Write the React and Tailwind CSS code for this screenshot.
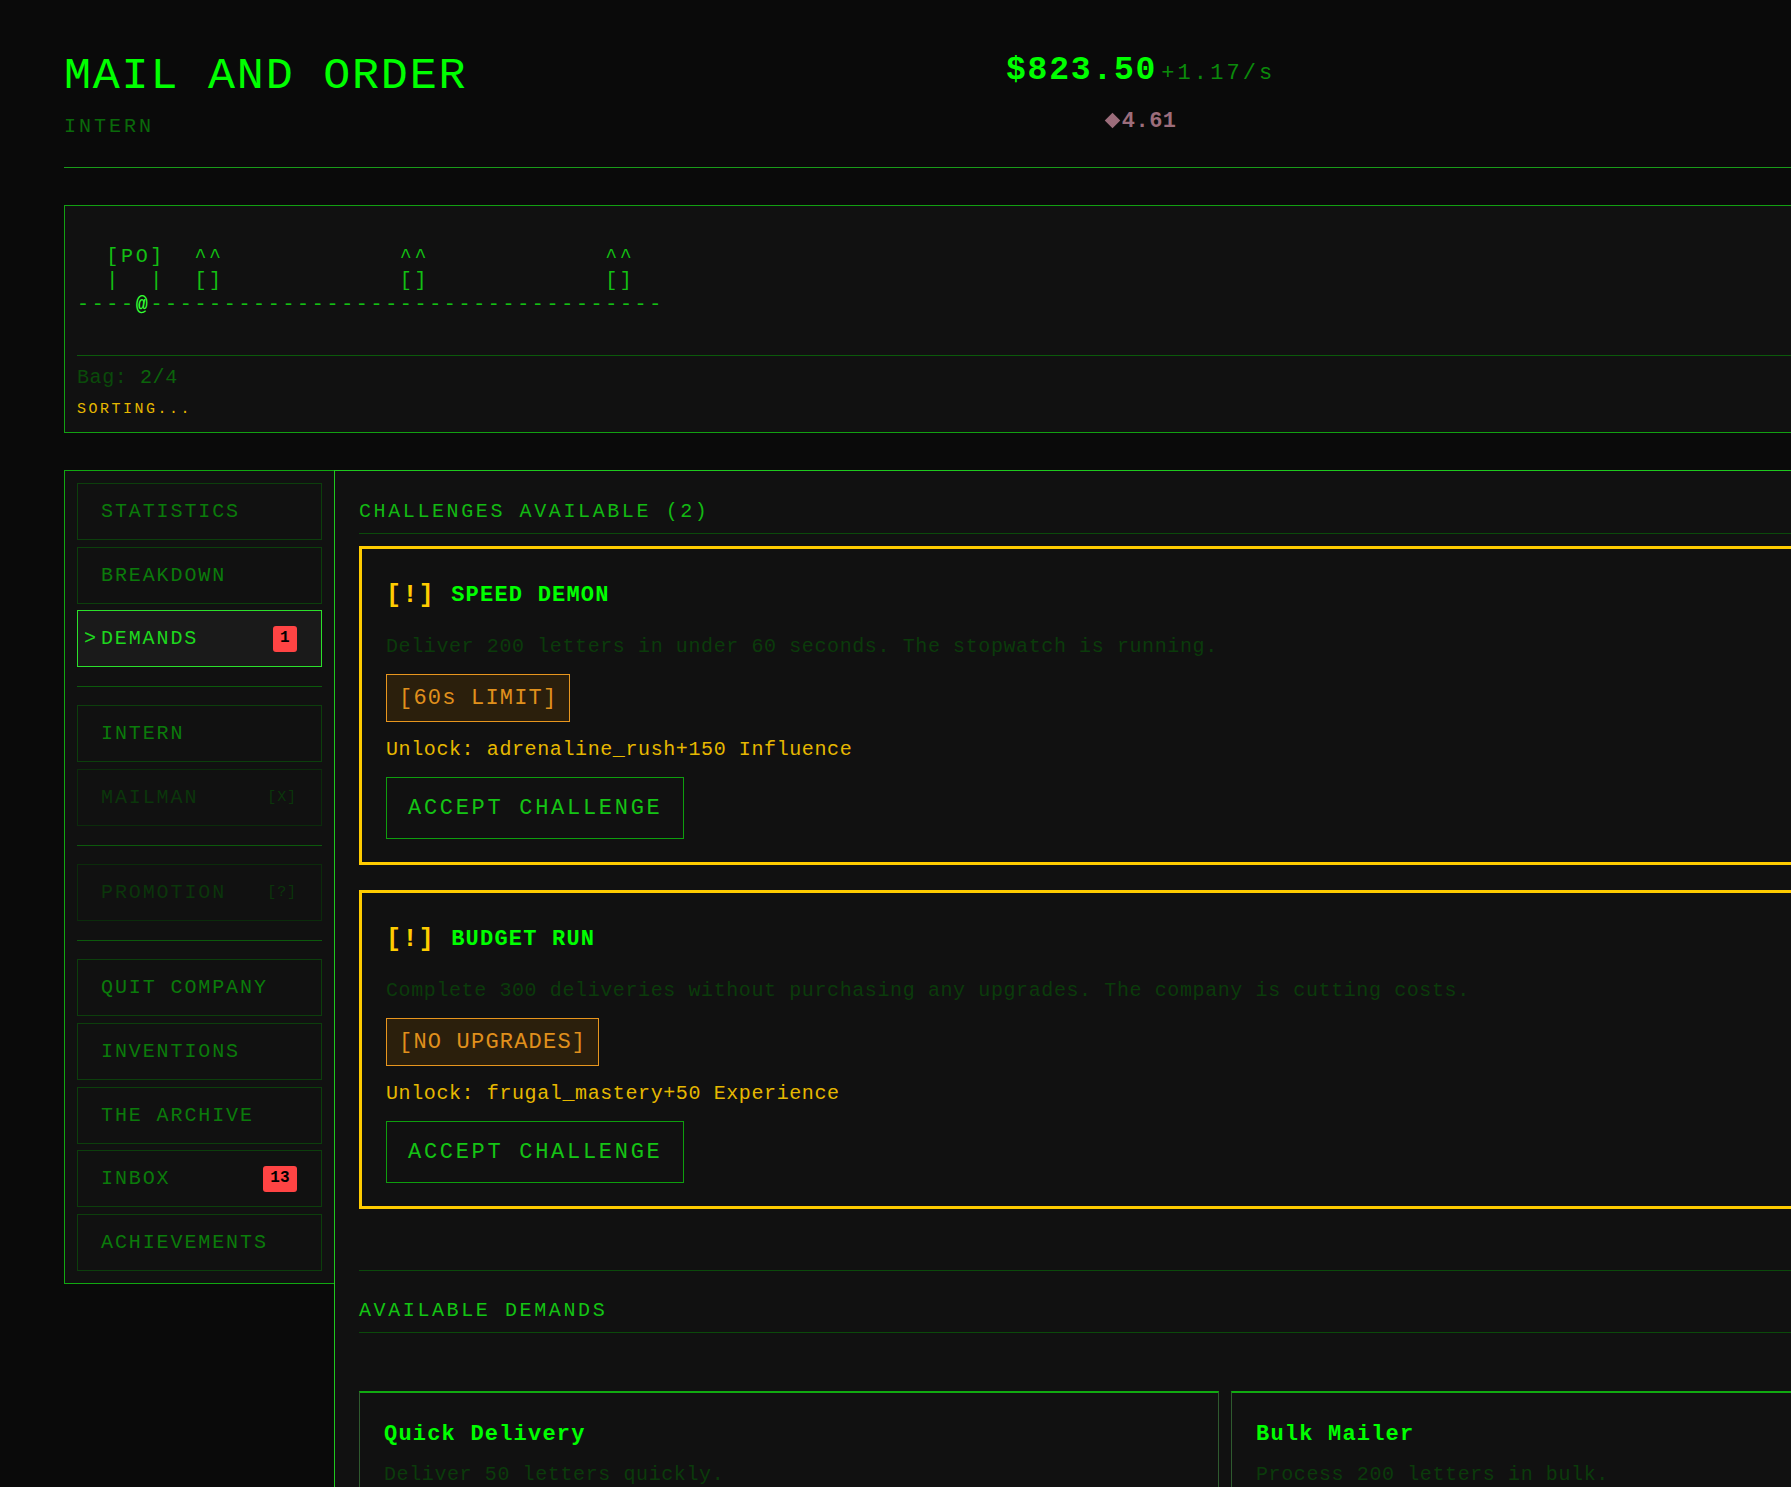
import React from 'react'

const NAV = [
  { label: 'STATISTICS' },
  { label: 'BREAKDOWN' },
  { label: 'DEMANDS', active: true, badge: '1' },
  { divider: true },
  { label: 'INTERN' },
  { label: 'MAILMAN', disabled: true, tag: '[X]' },
  { divider: true },
  { label: 'PROMOTION', disabled: true, tag: '[?]' },
  { divider: true },
  { label: 'QUIT COMPANY' },
  { label: 'INVENTIONS' },
  { label: 'THE ARCHIVE' },
  { label: 'INBOX', badge: '13' },
  { label: 'ACHIEVEMENTS' },
]

const CHALLENGES = [
  {
    name: 'SPEED DEMON',
    desc: 'Deliver 200 letters in under 60 seconds. The stopwatch is running.',
    tag: '[60s LIMIT]',
    unlock: 'Unlock: adrenaline_rush+150 Influence',
  },
  {
    name: 'BUDGET RUN',
    desc: 'Complete 300 deliveries without purchasing any upgrades. The company is cutting costs.',
    tag: '[NO UPGRADES]',
    unlock: 'Unlock: frugal_mastery+50 Experience',
  },
]

const DEMANDS = [
  { name: 'Quick Delivery', desc: 'Deliver 50 letters quickly.' },
  { name: 'Bulk Mailer', desc: 'Process 200 letters in bulk.' },
]

const ASCII =
  '  [PO]  ^^            ^^            ^^\n' +
  '  |  |  []            []            []\n' +
  '----'

function Badge({ n }) {
  return (
    <span className="flex h-[26px] items-center rounded-[3px] bg-[#ff4444] px-[7px] text-[16px] font-bold tracking-[0.3px] text-black">
      {n}
    </span>
  )
}

function NavItem({ item }) {
  if (item.divider) return <div className="my-3 h-px bg-[#0c5a0c]" />

  if (item.active) {
    return (
      <div className="flex h-[57px] items-center justify-between border border-[#2be02b] bg-[#1a1a1a] pl-[6px] pr-6 text-[20px] leading-[27px] tracking-[1.9px] text-[#1ed81e]">
        <div className="flex">
          <span>&gt;</span>
          <span className="ml-[3px]">{item.label}</span>
        </div>
        {item.badge && <Badge n={item.badge} />}
      </div>
    )
  }

  return (
    <div
      className={`flex h-[57px] items-center justify-between border pl-[23px] pr-6 text-[20px] leading-[27px] tracking-[1.9px] ${
        item.disabled ? 'border-[#0b2c0b] text-[#0b360b]' : 'border-[#0c3f0c] text-[#0b7b0b]'
      }`}
    >
      <span>{item.label}</span>
      {item.badge && <Badge n={item.badge} />}
      {item.tag && <span className="text-[15px] tracking-[0.9px]">{item.tag}</span>}
    </div>
  )
}

function ChallengeCard({ c }) {
  return (
    <div className="border-[3px] border-[#ffcc00] px-6 pt-[29px] pb-[23px]">
      <div className="flex items-center gap-4 font-bold leading-[36px]">
        <span className="text-[25px] tracking-[1.4px] text-[#ffcc00]">[!]</span>
        <span className="text-[22px] tracking-[1.2px] text-[#00ff00]">{c.name}</span>
      </div>
      <p className="mt-[17px] text-[20px] leading-[32px] tracking-[0.6px] text-[#0b3b0b]">{c.desc}</p>
      <div className="mt-[11px] flex h-[48px] w-fit items-center border border-[#e8961e] bg-[#2b1f0c] px-3 text-[22px] tracking-[1.2px] text-[#e0901c]">
        {c.tag}
      </div>
      <p className="mt-3 text-[20px] leading-[32px] tracking-[0.6px] text-[#e6b800]">{c.unlock}</p>
      <button className="mt-[11px] h-[62px] border border-[#0e9e0e] px-[21px] text-[22px] tracking-[2.7px] text-[#15c415]">
        ACCEPT CHALLENGE
      </button>
    </div>
  )
}

export default function App() {
  return (
    <div className="h-screen w-full overflow-hidden bg-[#0a0a0a] font-['Liberation_Mono',monospace]">
      <div className="w-[2116px] pl-16">
        {/* Header */}
        <header className="flex items-start border-b border-[#199b19] pt-[51px] pb-[27px]">
          <div className="w-[942px] shrink-0 pt-[2px]">
            <h1 className="text-[45px] leading-[48px] tracking-[1.8px] text-[#00ff00]">MAIL AND ORDER</h1>
            <div className="mt-[12px] text-[20px] leading-[27px] tracking-[3px] text-[#0a6a0a]">INTERN</div>
          </div>
          <div className="flex flex-col items-center">
            <div className="flex items-baseline">
              <span className="text-[33px] font-bold leading-[40px] tracking-[1.8px] text-[#00ff00]">$823.50</span>
              <span className="ml-[4px] text-[22px] tracking-[3.1px] text-[#0b8a0b]">+1.17/s</span>
            </div>
            <div className="mt-4 flex items-center text-[22px] font-bold leading-[30px] tracking-[0.5px] text-[#9c6d7b]">
              <span className="mb-[3px] ml-[2px] mr-[4px] h-[11px] w-[11px] rotate-45 bg-[#9c6d7b]" />
              <span>4.61</span>
            </div>
          </div>
        </header>

        {/* Route view */}
        <section className="mt-[37px] border border-[#12a012] bg-[#111111] p-3">
          <div className="h-[137px] pt-[27px]">
            <pre className="font-['Liberation_Mono',monospace] text-[20px] leading-[24px] tracking-[2.67px] text-[#13c013]">
              {ASCII}
              <span className="font-bold text-[#33ff33]">@</span>
              {'-'.repeat(35)}
            </pre>
          </div>
          <div className="border-t border-[#0b5a0b] pt-[8px]">
            <div className="text-[20px] leading-[27px] tracking-[0.6px] text-[#0a4a0a]">
              Bag: <span className="text-[#0b640b]">2/4</span>
            </div>
            <div className="mt-2 text-[15px] leading-[21px] tracking-[2.5px] text-[#e6b800]">SORTING...</div>
          </div>
        </section>

        <div className="mt-[37px] flex items-start">
          {/* Sidebar */}
          <aside className="w-[270px] shrink-0 border border-r-0 border-[#11a811] bg-[#111111] p-3">
            <nav className="flex flex-col gap-[6.6px]">
              {NAV.map((item, i) => (
                <NavItem key={i} item={item} />
              ))}
            </nav>
          </aside>

          {/* Main panel */}
          <main className="min-w-0 flex-1 border border-[#1ec81e] bg-[#111111] p-6">
            <h2 className="border-b border-[#0b4a0b] pt-[3px] pb-[8px] text-[20px] leading-[27px] tracking-[2.6px] text-[#13b913]">
              CHALLENGES AVAILABLE (2)
            </h2>
            <div className="mt-3 flex flex-col gap-[25px]">
              {CHALLENGES.map(c => (
                <ChallengeCard key={c.name} c={c} />
              ))}
            </div>

            <div className="mt-[61px] border-t border-[#0b4a0b] pt-[23px]">
              <h2 className="border-b border-[#0b4a0b] pt-[3px] pb-[8px] text-[20px] leading-[27px] tracking-[2.6px] text-[#14c414]">
                AVAILABLE DEMANDS
              </h2>
              <div className="mt-[58px] grid grid-cols-2 gap-3">
                {DEMANDS.map(d => (
                  <div key={d.name} className="border border-[#2f5a2f] border-t-2 border-t-[#11aa11] p-6">
                    <div className="text-[22px] font-bold leading-[36px] tracking-[1.2px] text-[#00ff00]">{d.name}</div>
                    <p className="mt-[6px] text-[20px] leading-[32px] tracking-[0.6px] text-[#0b3b0b]">{d.desc}</p>
                  </div>
                ))}
              </div>
            </div>
          </main>
        </div>
      </div>
    </div>
  )
}
